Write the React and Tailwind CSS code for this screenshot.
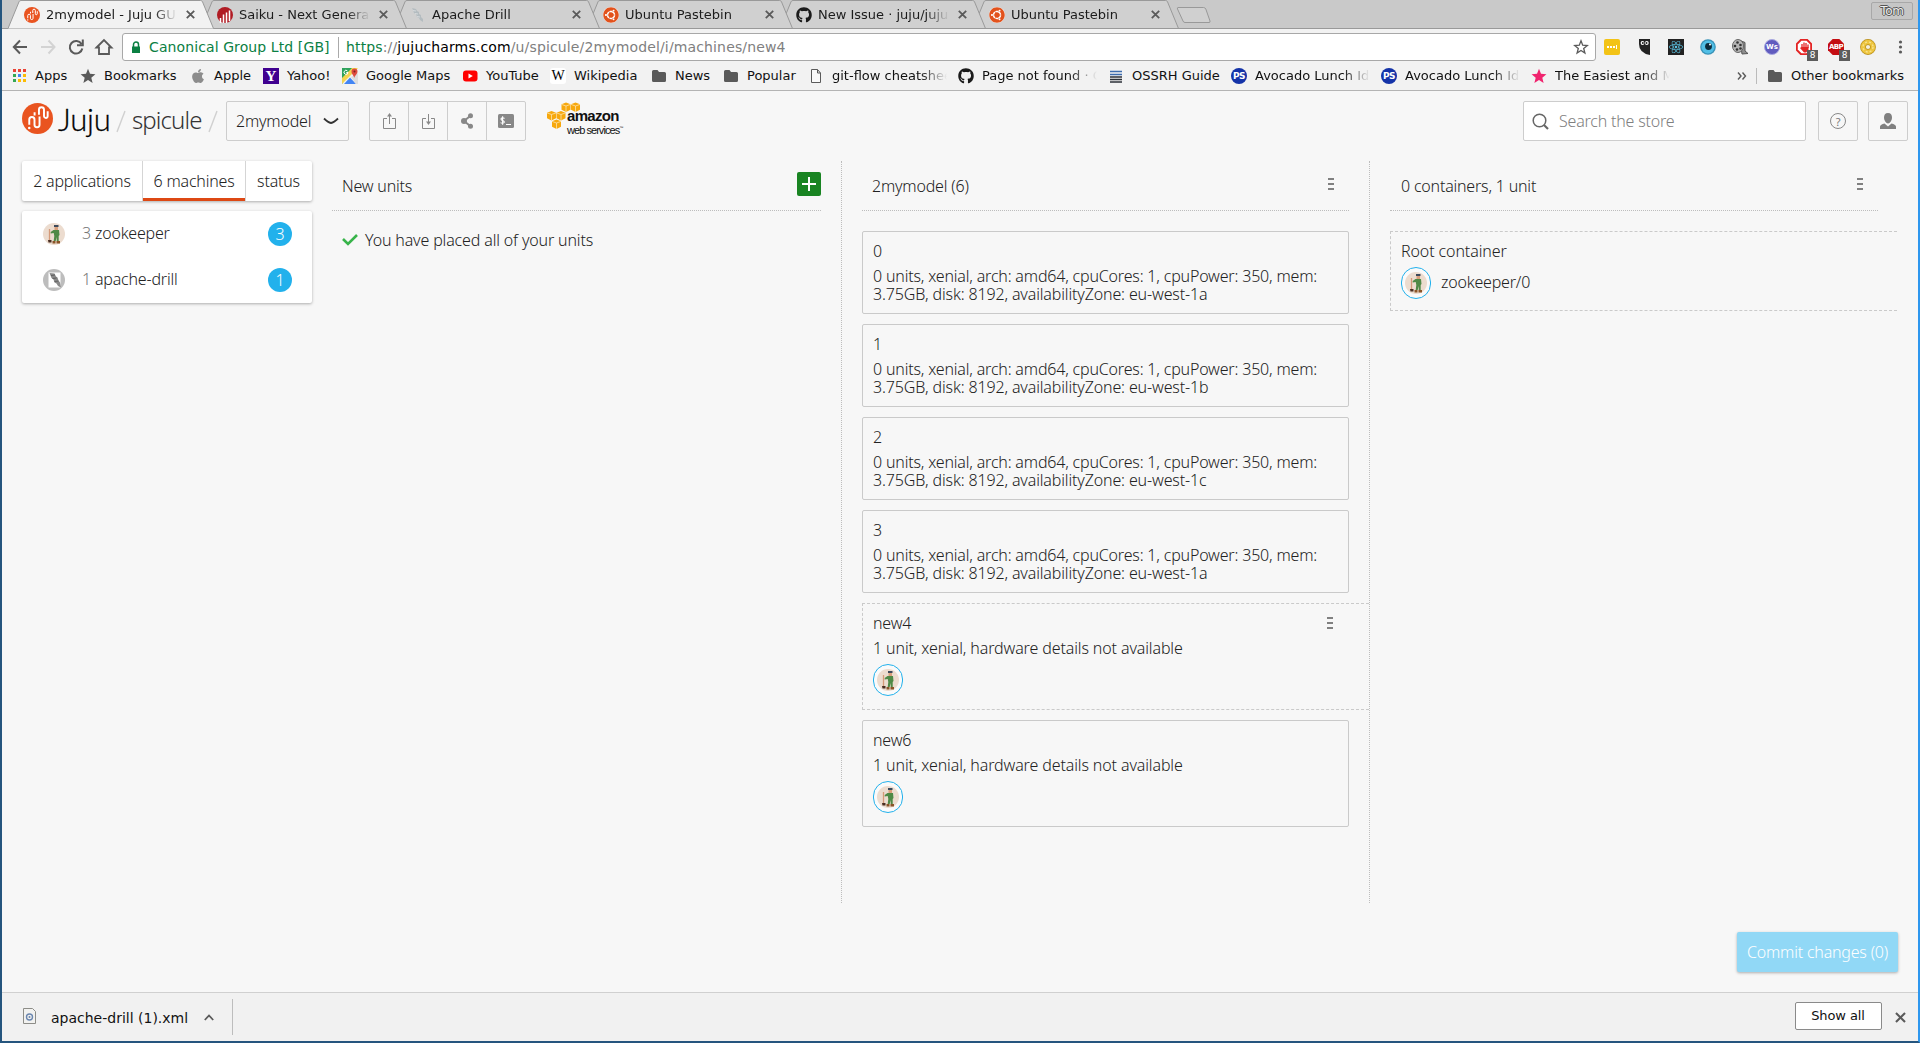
import { FaApple, FaGithub, FaReact, FaUbuntu } from 'react-icons/fa';

const machines = [
  { name: '0', zone: 'eu-west-1a' },
  { name: '1', zone: 'eu-west-1b' },
  { name: '2', zone: 'eu-west-1c' },
  { name: '3', zone: 'eu-west-1a' },
];

const JujuMark = ({ size = 16 }) => (
  <svg width={size} height={size} viewBox="0 0 32 32">
    <circle cx="16" cy="16" r="16" fill="#e95420" />
    <g fill="none" stroke="#fff" strokeWidth="2">
      <path d="M7.500 22.500V17.200a2.700 2.700 0 0 1 5.400 0V22.500a2.600 2.600 0 0 0 5.200 0V14" />
      <path d="M13 13V9.500M17.500 12V7a2.600 2.600 0 0 1 5.200 0V13.500a1.900 1.900 0 0 0 3.800 0V8.500" />
    </g>
    <circle cx="7.500" cy="25.800" r="1.300" fill="#fff" />
  </svg>
);

const SaikuMark = () => (
  <svg width="16" height="16" viewBox="0 0 16 16">
    <circle cx="8" cy="8" r="8" fill="#b01c24" />
    <path d="M3.500 16v-5M6.500 16V7.500M9.500 16V5.500M12.500 14V3.500" stroke="#fff" strokeWidth="1.500" />
  </svg>
);

const DrillMark = () => (
  <svg width="16" height="16" viewBox="0 0 16 16">
    <path d="M2 1l4 1 1 2 2 1v2l2 1v2l2 2v3l-3-2-1-2-2-1-1-3-2-1-1-3z" fill="#b4bcc0" />
    <path d="M3 3.500l3 .5M5 6.500l3 .5M7 9.500l3 .5" stroke="#dde1e3" strokeWidth=".8" />
  </svg>
);

const UbuntuMark = () => (
  <span className="flex size-4 items-center justify-center rounded-full bg-white">
    <FaUbuntu size={16} color="#e2521c" />
  </span>
);

const tabs = [
  { title: '2mymodel - Juju GUI', icon: <JujuMark />, active: true },
  { title: 'Saiku - Next Generation', icon: <SaikuMark /> },
  { title: 'Apache Drill', icon: <DrillMark /> },
  { title: 'Ubuntu Pastebin', icon: <UbuntuMark /> },
  { title: 'New Issue · juju/juju', icon: <FaGithub size={16} color="#1b1b1b" /> },
  { title: 'Ubuntu Pastebin', icon: <UbuntuMark /> },
];

const Cross = ({ size = 9, width = 1.8 }) => (
  <svg width={size} height={size} viewBox="0 0 9 9" className="shrink-0">
    <path d="M.8.8l7.400 7.400M8.200.8L.8 8.200" stroke="#5a5a5a" strokeWidth={width} />
  </svg>
);

function Tab({ title, icon, active, z }) {
  return (
    <div className="relative h-[29px] w-[193px] shrink-0" style={{ zIndex: z }}>
      <svg width="207" height="29" viewBox="0 0 207 29" className="absolute left-0 top-0 max-w-none">
        <path d="M0 28.500L11 1.800Q11.500.5 13 .5H192.500Q194 .5 194.500 1.800L205.500 28.500" fill={active ? '#f2f2f2' : '#d0d0d0'} stroke="#999" />
        {!active && <path d="M0 28.500H207" stroke="#999" />}
      </svg>
      <div className="relative flex h-[29px] items-center pl-4">
        {icon}
        <span className="ml-[6px] w-[133px] overflow-hidden whitespace-nowrap text-[13px] text-[#1c1c1c] [mask-image:linear-gradient(to_right,#000_108px,transparent_131px)]">{title}</span>
        <span className="ml-[7px]"><Cross /></span>
      </div>
    </div>
  );
}

const Folder = () => (
  <svg width="16" height="16" viewBox="0 0 16 16">
    <path d="M1 3.500Q1 2 2.500 2H6.500L8 4H13.500Q15 4 15 5.500V12.500Q15 14 13.500 14H2.500Q1 14 1 12.500z" fill="#5a5a5a" />
  </svg>
);

const Star = ({ fill }) => (
  <svg width="16" height="16" viewBox="0 0 16 16">
    <path d="M8 .8l2 5 5.400.4-4.100 3.500 1.300 5.300L8 12.100 3.400 15l1.300-5.300L.6 6.200 6 5.800z" fill={fill} />
  </svg>
);

const AppsGrid = () => (
  <svg width="16" height="16" viewBox="0 0 16 16">
    {['#ea4335', '#ea4335', '#ea4335', '#34a853', '#4285f4', '#fbbc05', '#34a853', '#fbbc05', '#fbbc05'].map((c, i) => (
      <rect key={i} x={2 + (i % 3) * 5} y={1 + Math.floor(i / 3) * 5} width="3" height="3" fill={c} />
    ))}
  </svg>
);

const MapsMark = () => (
  <svg width="16" height="16" viewBox="0 0 16 16">
    <path d="M0 0h11L0 16z" fill="#2fa25c" />
    <path d="M16 0H10L0 10v6z" fill="#f3d351" />
    <path d="M2 16l6-6.500L14 16z" fill="#4285f4" />
    <path d="M16 5v11h-2L9 9z" fill="#ddd" />
    <path d="M12.300 10C11.800 7 9.500 6.500 9.500 3.500a3 3 0 0 1 6 0C15.500 6.500 12.800 7 12.300 10z" fill="#dd4b3e" />
    <circle cx="12.500" cy="3.500" r="1" fill="#7b231e" />
    <path d="M5.500 3A2 2 0 1 0 6 4.500H4.300" fill="none" stroke="#fff" />
  </svg>
);

const YoutubeMark = () => (
  <svg width="16" height="16" viewBox="0 0 16 16">
    <rect x="1" y="2.500" width="14.500" height="11" rx="3" fill="#f00" />
    <path d="M6.500 5.500v5l4.300-2.500z" fill="#fff" />
  </svg>
);

const FileMark = () => (
  <svg width="16" height="16" viewBox="0 0 16 16">
    <path d="M3.500 1.500H9.500L12.500 5V14.500H3.500zM9.500 1.500V5H12.500" fill="#fafafa" stroke="#5a5a5a" />
  </svg>
);

const LinesMark = () => (
  <svg width="16" height="16" viewBox="0 0 16 16">
    <path d="M2 3.500h12M2 6.500h12" stroke="#3d6cae" strokeWidth="1.500" />
    <path d="M2 9h12M2 11.500h12M2 14h12" stroke="#2c3138" strokeWidth="1.400" />
  </svg>
);

const PsMark = () => (
  <span className="flex size-4 items-center justify-center rounded-full bg-[#1433a8] text-[9px] font-bold leading-none tracking-[-0.5px] text-white">PS</span>
);

const bookmarks = [
  { label: 'Apps', icon: <AppsGrid />, w: 'w-[69px]' },
  { label: 'Bookmarks', icon: <Star fill="#5a5a5a" />, w: 'w-[110px]' },
  { label: 'Apple', icon: <FaApple size={16} color="#8c8c8c" />, w: 'w-[73px]' },
  {
    label: 'Yahoo!',
    icon: <span className="flex size-4 items-center justify-center bg-[#400090] font-['Liberation_Serif'] text-[15px] font-bold leading-none text-white">Y</span>,
    w: 'w-[79px]',
  },
  { label: 'Google Maps', icon: <MapsMark />, w: 'w-[120px]' },
  { label: 'YouTube', icon: <YoutubeMark />, w: 'w-[88px]' },
  {
    label: 'Wikipedia',
    icon: <span className="flex size-4 items-center justify-center rounded-[3px] bg-white font-['Liberation_Serif'] text-[14px] leading-none text-black">W</span>,
    w: 'w-[101px]',
  },
  { label: 'News', icon: <Folder />, w: 'w-[72px]' },
  { label: 'Popular', icon: <Folder />, w: 'w-[85px]' },
  { label: 'git-flow cheatsheet', icon: <FileMark />, w: 'w-[150px]', fade: true },
  { label: 'Page not found · GitHub', icon: <FaGithub size={16} color="#1b1b1b" />, w: 'w-[150px]', fade: true },
  { label: 'OSSRH Guide', icon: <LinesMark />, w: 'w-[123px]' },
  { label: 'Avocado Lunch Ideas', icon: <PsMark />, w: 'w-[150px]', fade: true },
  { label: 'Avocado Lunch Ideas', icon: <PsMark />, w: 'w-[150px]', fade: true },
  { label: 'The Easiest and Most', icon: <Star fill="#f0246e" />, w: 'w-[150px]', fade: true },
];

function Browser() {
  return (
    <div className="font-['DejaVu_Sans',sans-serif] text-[#111]">
      {/* Tab strip */}
      <div className="relative flex h-[29px] bg-[#c9c9c9] pl-[6px]">
        <div className="absolute inset-x-0 bottom-0 h-px bg-[#999]" />
        {tabs.map((tab, i) => (
          <Tab key={i} {...tab} z={10 - i} />
        ))}
        <svg width="38" height="18" viewBox="0 0 38 18" className="ml-[10px] mt-[6px]">
          <path d="M2 1.500H27.500Q29 1.500 29.800 3L34 15Q34.500 16.500 33 16.500H9Q7.500 16.500 7 15L1.500 3Q1 1.500 2 1.500z" fill="#d0d0d0" stroke="#999" />
        </svg>
        <div className="ml-auto mr-[5px] mt-[2px] h-[18px] w-[42px] rounded-[2px] border border-[#a8a8a8] bg-[#c6c6c6] text-center text-[12px] leading-[16px] tracking-[-0.3px] text-[#eee] [text-shadow:1px_0_0_#555,-1px_0_0_#555,0_1px_0_#555,0_-1px_0_#555]">Tom</div>
      </div>

      {/* Toolbar */}
      <div className="flex h-[36px] items-center bg-[#f2f2f2] pl-[10px]">
        <svg width="104" height="18" viewBox="0 0 104 18" className="shrink-0" fill="none" strokeWidth="2">
          <path d="M15 9H2M8 2.500L1.800 9 8 15.500" stroke="#5a5a5a" />
          <path d="M29 9H42M36.500 2.500L42.500 9 36.500 15.500" stroke="#d3d3d3" />
          <path d="M69.500 6A6.300 6.300 0 1 0 70.300 10.500M70.800 1.500V7.200H65" stroke="#5a5a5a" />
          <path d="M84.500 9.500L92 2 99.500 9.500H97V16H87V9.500z" stroke="#5a5a5a" strokeWidth="1.800" />
        </svg>
        <div className="ml-[6px] flex h-[28px] w-[1474px] shrink-0 items-center rounded-[3px] border border-[#a8a8a8] bg-white pl-[8px] text-[14px]">
          <svg width="10" height="13" viewBox="0 0 10 13">
            <path d="M1 5.500h8v6.500H1z" fill="#0b8043" />
            <path d="M2.500 6V3.500a2.500 2.500 0 0 1 5 0V6" fill="none" stroke="#0b8043" strokeWidth="1.500" />
          </svg>
          <span className="ml-[8px] w-[190px] whitespace-nowrap border-r border-[#aaa] tracking-[0.1px] text-[#0b8043]">Canonical Group Ltd [GB]</span>
          <span className="ml-[7px] whitespace-nowrap tracking-[0.14px] text-[#808080]">
            <span className="text-[#0b8043]">https</span>://<span className="text-black">jujucharms.com</span>/u/spicule/2mymodel/i/machines/new4
          </span>
          <svg width="16" height="16" viewBox="0 0 16 16" className="ml-auto mr-[6px]">
            <path d="M8 1.800l1.700 4.400 4.600.3-3.600 3 1.200 4.500L8 11.500 4.100 14l1.200-4.500-3.600-3 4.600-.3z" fill="none" stroke="#5a5a5a" strokeWidth="1.300" />
          </svg>
        </div>
        <div className="ml-[8px] flex items-center gap-4">
          <span className="flex size-4 items-center justify-center gap-px rounded-[2px] bg-[#f3c316]">
            <i className="size-[2px] bg-white" /><i className="size-[2px] bg-white" /><i className="size-[2px] bg-white" /><i className="h-1 w-px bg-white" />
          </span>
          <svg width="16" height="16" viewBox="0 0 16 16">
            <path d="M3 0h11v16Q3 14 3 5z" fill="#222" />
            <circle cx="6.500" cy="4" r="1.900" fill="#fff" /><circle cx="10.800" cy="4" r="1.900" fill="#fff" />
            <circle cx="6.800" cy="4" r="1" fill="#222" /><circle cx="10.500" cy="4" r="1" fill="#222" />
          </svg>
          <span className="flex size-4 items-center justify-center bg-[#222]"><FaReact size={14} color="#5cc4e4" /></span>
          <svg width="16" height="16" viewBox="0 0 16 16">
            <circle cx="8" cy="8" r="7.800" fill="#3a93b8" /><circle cx="8" cy="8" r="6.500" fill="#52bfe6" />
            <circle cx="8.500" cy="7.500" r="3.400" fill="#0b2a3a" /><circle cx="10" cy="5.500" r="1" fill="#fff" />
          </svg>
          <svg width="16" height="16" viewBox="0 0 16 16">
            <path d="M8 1.500l5 2V12l3 2.500-6 .5z" fill="#8f8f8f" stroke="#555" />
            <ellipse cx="6" cy="7" rx="5.500" ry="6.500" fill="#b5b5b5" stroke="#666" />
            <circle cx="5.500" cy="3.500" r="1.300" fill="#333" /><circle cx="8.500" cy="6" r="1.300" fill="#333" />
            <circle cx="3" cy="7" r="1.300" fill="#333" /><circle cx="5" cy="10.500" r="1.300" fill="#333" /><circle cx="8.500" cy="9.500" r="1.300" fill="#333" />
          </svg>
          <span className="flex size-4 items-center justify-center rounded-full border border-[#a9a9e0] bg-[#615cbf] text-[7px] font-bold leading-none text-white">Ws</span>
          <span className="relative size-4">
            <svg width="16" height="16" viewBox="0 0 16 16">
              <path d="M5 .8h6L15.200 5v6L11 15.200H5L.8 11V5z" fill="#fff" stroke="#e32424" strokeWidth="2" />
              <path d="M6 8.500V5M8 8V3.500M10 8V4M12 9V5.500" stroke="#e32424" strokeWidth="1.300" />
              <path d="M5.500 8h7v3L10 13.500H8L4 9z" fill="#e32424" />
            </svg>
            <b className="absolute left-[11px] top-[11px] h-[11px] w-[11px] bg-[#5c5c5c] text-center text-[9px] font-normal leading-[11px] text-white">8</b>
          </span>
          <span className="relative size-4">
            <svg width="16" height="16" viewBox="0 0 16 16"><path d="M4.700 0h6.600L16 4.700v6.600L11.300 16H4.700L0 11.300V4.700z" fill="#c40d12" /></svg>
            <b className="absolute inset-x-0 top-[3px] text-center text-[7px] font-bold leading-[10px] tracking-[-0.6px] text-white">ABP</b>
            <b className="absolute left-[11px] top-[11px] h-[11px] w-[11px] bg-[#5c5c5c] text-center text-[9px] font-normal leading-[11px] text-white">8</b>
          </span>
          <svg width="16" height="16" viewBox="0 0 16 16">
            <circle cx="8" cy="8" r="5" fill="#f4f0e0" stroke="#b98f1c" strokeWidth="5.800" />
            <circle cx="8" cy="8" r="5" fill="none" stroke="#edc53f" strokeWidth="4.400" />
            <circle cx="8" cy="8" r="5" fill="none" stroke="#f8e08a" strokeWidth="1.400" strokeDasharray="2 2" />
          </svg>
          <svg width="16" height="16" viewBox="0 0 16 16" fill="#5a5a5a">
            <circle cx="8.500" cy="3" r="1.600" /><circle cx="8.500" cy="8" r="1.600" /><circle cx="8.500" cy="13" r="1.600" />
          </svg>
        </div>
      </div>

      {/* Bookmarks bar */}
      <div className="flex h-[26px] items-center border-b border-[#b4b4b4] bg-[#f2f2f2] pb-[3px] pl-[9px] text-[13px]">
        {bookmarks.map((b, i) => (
          <div key={i} className={`flex shrink-0 items-center ${b.w}`}>
            {b.icon}
            <span className={b.fade ? 'ml-2 w-[115px] overflow-hidden whitespace-nowrap [mask-image:linear-gradient(to_right,#000_88px,transparent_115px)]' : 'ml-2 whitespace-nowrap'}>{b.label}</span>
          </div>
        ))}
        <svg width="10" height="8" viewBox="0 0 10 8" className="ml-[56px]">
          <path d="M1 .5L4 4 1 7.500M5.500.5L8.500 4 5.500 7.500" fill="none" stroke="#5a5a5a" strokeWidth="1.400" />
        </svg>
        <div className="ml-[9px] mr-[10px] h-4 w-px bg-[#bbb]" />
        <Folder />
        <span className="ml-2 whitespace-nowrap">Other bookmarks</span>
      </div>
    </div>
  );
}

const AwsLogo = () => (
  <div className="relative ml-[20px] h-[34px] w-[80px]">
    <svg width="36" height="30" viewBox="0 0 36 30">
      {[[15.5, 1.5], [25, 1.5], [1, 10], [10.5, 10], [6, 18.500]].map(([x, y], i) => (
        <g key={i} transform={`translate(${x} ${y})`}>
          <path d="M0 1.800L4.500 0 9 1.800V7.200L4.500 9.500 0 7.200z" fill="#f7a80d" />
          <path d="M0 1.900L4.500 3.500 9 1.900M4.500 3.500V9.500" fill="none" stroke="#fde3ad" strokeWidth=".8" />
        </g>
      ))}
    </svg>
    <div className="absolute left-[21px] top-[8px] font-['Liberation_Sans',sans-serif] text-[15px] font-bold leading-[14px] tracking-[-0.7px] text-[#111]">amazon</div>
    <div className="absolute left-[21px] top-[22px] whitespace-nowrap font-['Liberation_Sans',sans-serif] text-[11px] leading-[10px] tracking-[-0.95px] text-[#111]">web services<span className="align-super text-[4px]">™</span></div>
  </div>
);

function Header() {
  return (
    <header className="flex h-[50px] shrink-0 items-start pl-5 pr-[10px] pt-[10px] text-[16px]">
      <div className="mt-[2px]"><JujuMark size={31} /></div>
      <span className="-mt-px ml-[5px] w-[57px] font-['Lato'] text-[31px] leading-[38px] text-black [-webkit-text-stroke:0.3px_#000]">Juju</span>
      <svg width="10" height="24" viewBox="0 0 10 24" className="ml-px mt-[9px]"><path d="M1 22L9 1" stroke="#d0d0d0" strokeWidth="1.400" /></svg>
      <span className="ml-[6px] w-[70px] text-[24px] font-light leading-[38px] tracking-[-0.9px] text-[#333]">spicule</span>
      <svg width="10" height="24" viewBox="0 0 10 24" className="ml-[6px] mt-[9px]"><path d="M1 22L9 1" stroke="#d0d0d0" strokeWidth="1.400" /></svg>
      <div className="ml-[8px] flex h-10 w-[123px] items-center justify-between rounded-[2px] border border-[#cdcdcd] pl-[9px] pr-[9px]">
        2mymodel
        <svg width="16" height="8" viewBox="0 0 16 8"><path d="M1 1.500Q5 5.500 8 6 11 5.500 15 1.500" fill="none" stroke="#333" strokeWidth="1.800" /></svg>
      </div>
      <div className="ml-5 flex h-10 w-[157px] divide-x divide-[#cdcdcd] rounded-[2px] border border-[#cdcdcd]">
        <div className="flex flex-1 items-center justify-center">
          <svg width="16" height="18" viewBox="0 0 16 18" fill="none" stroke="#888"><path d="M6 6.500H2.500V16.500H14.500V6.500H11M8.500 12V3" /><path d="M8.500 1l2.500 3.500H6z" fill="#888" stroke="none" /></svg>
        </div>
        <div className="flex flex-1 items-center justify-center">
          <svg width="16" height="18" viewBox="0 0 16 18" fill="none" stroke="#888"><path d="M6 6.500H2.500V16.500H14.500V6.500H11M8.500 2V10" /><path d="M8.500 13L11 9.500H6z" fill="#888" stroke="none" /></svg>
        </div>
        <div className="flex flex-1 items-center justify-center">
          <svg width="14" height="16" viewBox="0 0 14 16" fill="#888"><circle cx="4" cy="8" r="3" /><circle cx="10.500" cy="2.800" r="2.500" /><circle cx="10.500" cy="13.200" r="2.500" /><path d="M10.500 2.800L4 8 10.500 13.200" fill="none" stroke="#888" strokeWidth="2" /></svg>
        </div>
        <div className="flex flex-1 items-center justify-center">
          <svg width="16" height="14" viewBox="0 0 16 14"><rect width="16" height="14" rx="1.500" fill="#888" /><path d="M6.500 4.500Q4.700 3.200 3.300 4.200 2.500 5.500 4.500 6.500 6.800 7.300 6 8.600 4.500 9.800 2.600 8.600M4.600 2.300V10.700M8 10.500H13" fill="none" stroke="#fff" strokeWidth="1.100" /></svg>
        </div>
      </div>
      <AwsLogo />
      <div className="ml-auto flex h-10 w-[283px] items-center rounded-[2px] border border-[#cdcdcd] bg-white pl-[8px] text-[#808080]">
        <svg width="17" height="17" viewBox="0 0 17 17" fill="none" stroke="#666"><circle cx="7.500" cy="7.500" r="6.300" strokeWidth="1.500" /><path d="M12 12l4 4" strokeWidth="2.200" /></svg>
        <span className="ml-[10px]">Search the store</span>
      </div>
      <div className="ml-3 flex h-10 w-10 items-center justify-center rounded-[2px] border border-[#cdcdcd]">
        <span className="flex size-4 items-center justify-center rounded-full border border-[#888] text-[11px] font-normal leading-none text-[#777]">?</span>
      </div>
      <div className="ml-[10px] flex h-10 w-10 items-center justify-center rounded-[2px] border border-[#cdcdcd]">
        <svg width="16" height="16" viewBox="0 0 16 16" fill="#808080"><path d="M8 0C10.800 0 12 2 12 4.500S10.500 10 8 10.500C5.500 10 4 7 4 4.500S5.200 0 8 0z" /><path d="M0 16v-2.500Q.5 11.500 4.500 10.500L8 13.500 11.500 10.500Q15.500 11.500 16 13.500V16z" /></svg>
      </div>
    </header>
  );
}

const Zookeeper = () => (
  <svg width="22" height="22" viewBox="0 0 22 22">
    <circle cx="11" cy="11" r="11" fill="#ecdccf" />
    <path d="M6.500 6v11" stroke="#d59a78" strokeWidth="1.300" />
    <path d="M5 17h3.500v2.500H5.500z" fill="#4a2e22" />
    <path d="M11 2h4.500v2H11z" fill="#3c4a5c" />
    <path d="M11.500 4h3.500v3h-3.500z" fill="#d9a07c" />
    <path d="M10.500 7h5.500l.5 5-.8 1v5h-2v-4l-1 4h-2l.6-5-.6-3-3 .5V9z" fill="#4f8a46" />
    <path d="M9.500 18h3v2.500h-3zM13.500 18h3.500v2.500h-3.500z" fill="#8a5528" />
  </svg>
);

const Drill = () => (
  <svg width="22" height="22" viewBox="0 0 22 22">
    <circle cx="11" cy="11" r="11" fill="#bdbdbd" />
    <path d="M5.500 3.500h12v15h-12z" fill="#fff" />
    <path d="M6.500 4l5 .5 1.500 3 1.500 1 1 3 1.500 2 1 5-3-1.500-1.500-2.500-2-1-1-3-2-1.500z" fill="#8a8a8a" />
    <path d="M8 6.500l4-.5M9.500 9.500l4-.5M11.500 12.500l4-.5" stroke="#555" strokeWidth=".8" />
  </svg>
);

const UnitAvatar = () => (
  <span className="flex h-[32px] w-[30px] items-center justify-center rounded-full border border-[#22b1ec] bg-[#fafafa]"><Zookeeper /></span>
);

const Kebab = () => (
  <span className="flex flex-col gap-[3px]">
    <i className="h-[2px] w-[6px] bg-[#808080]" /><i className="h-[2px] w-[6px] bg-[#808080]" /><i className="h-[2px] w-[6px] bg-[#808080]" />
  </span>
);

function AppRow({ icon, count, name }) {
  return (
    <div className="flex h-[46px] items-center pl-[21px] pr-5">
      {icon}
      <span className="-mt-[2px] ml-[17px] text-[#777]">{count}</span>
      <span className="-mt-[2px] ml-1">{name}</span>
      <span className="ml-auto flex size-6 items-center justify-center rounded-full bg-[#22b1ec] text-white">{count}</span>
    </div>
  );
}

function Sidebar() {
  return (
    <aside className="ml-5 w-[290px] shrink-0">
      <div className="flex h-10 rounded-[2px] bg-white shadow-[0_1px_3px_rgba(0,0,0,0.3)]">
        <div className="flex w-[121px] items-center justify-center border-r border-[#d5d5d5]">2 applications</div>
        <div className="flex w-[102px] items-center justify-center border-b-[3px] border-[#dd4814] pt-[3px]">6 machines</div>
        <div className="flex flex-1 items-center justify-center border-l border-[#d5d5d5] pr-px">status</div>
      </div>
      <div className="mt-[10px] h-[92px] rounded-[2px] bg-white shadow-[0_1px_3px_rgba(0,0,0,0.3)]">
        <AppRow icon={<Zookeeper />} count="3" name="zookeeper" />
        <AppRow icon={<Drill />} count="1" name="apache-drill" />
      </div>
    </aside>
  );
}

function Machine({ name, children }) {
  return (
    <div className="h-[83px] rounded-[2px] border border-[#cacaca] px-[10px] pt-[10px] leading-[18px]">
      <div>{name}</div>
      <div className="mt-[7px]">{children}</div>
    </div>
  );
}

function Columns() {
  return (
    <>
      <section className="ml-5 w-[510px] shrink-0 border-r border-dotted border-[#bdbdbd] pr-5">
        <div className="flex h-[50px] items-center border-b border-dotted border-[#bdbdbd] pl-[10px]">
          <span>New units</span>
          <span className="mb-[3px] ml-auto flex size-6 items-center justify-center rounded-[2px] bg-[#198422]">
            <svg width="14" height="14" viewBox="0 0 14 14"><path d="M7 0v14M0 7h14" stroke="#fff" strokeWidth="2" /></svg>
          </span>
        </div>
        <div className="flex items-center pl-[10px] pt-[17px]">
          <svg width="16" height="12" viewBox="0 0 16 12"><path d="M1 5l5 5L15 1" fill="none" stroke="#38b44a" strokeWidth="2.600" /></svg>
          <span className="ml-[7px] tracking-[-0.15px]">You have placed all of your units</span>
        </div>
      </section>

      <section className="w-[528px] shrink-0 border-r border-dotted border-[#bdbdbd] pl-5">
        <div className="mr-5 flex h-[50px] items-center justify-between border-b border-dotted border-[#bdbdbd] pl-[10px] pr-[15px]">
          <span>2mymodel (6)</span>
          <span className="-mt-[3px]"><Kebab /></span>
        </div>
        <div className="mr-5 mt-5 flex flex-col gap-[10px]">
          {machines.map((m) => (
            <Machine key={m.name} name={m.name}>
              <div className="tracking-[-0.18px]">0 units, xenial, arch: amd64, cpuCores: 1, cpuPower: 350, mem:</div>
              <div className="tracking-[-0.14px]">3.75GB, disk: 8192, availabilityZone: {m.zone}</div>
            </Machine>
          ))}
          <div className="-mr-5 flex h-[107px] justify-between border border-r-0 border-dashed border-[#cacaca] pl-[10px] pr-[36px] pt-[10px] leading-[18px]">
            <div>
              <div>new4</div>
              <div className="mb-[7px] mt-[7px] tracking-[-0.12px]">1 unit, xenial, hardware details not available</div>
              <UnitAvatar />
            </div>
            <span className="mt-[3px]"><Kebab /></span>
          </div>
          <div className="h-[107px] rounded-[2px] border border-[#cacaca] pl-[10px] pt-[10px] leading-[18px]">
            <div>new6</div>
            <div className="mb-[7px] mt-[7px] tracking-[-0.12px]">1 unit, xenial, hardware details not available</div>
            <UnitAvatar />
          </div>
        </div>
      </section>

      <section className="w-[527px] shrink-0 pl-5">
        <div className="mr-[19px] flex h-[50px] items-center justify-between border-b border-dotted border-[#bdbdbd] pl-[11px] pr-[15px]">
          <span>0 containers, 1 unit</span>
          <span className="-mt-[3px]"><Kebab /></span>
        </div>
        <div className="mt-5 h-[80px] border border-r-0 border-dashed border-[#cacaca] pl-[10px] pt-[10px] leading-[18px]">
          <div className="tracking-[-0.1px]">Root container</div>
          <div className="mt-[7px] flex items-center">
            <UnitAvatar />
            <span className="-mt-[2px] ml-[10px]">zookeeper/0</span>
          </div>
        </div>
      </section>
    </>
  );
}

export default function App() {
  return (
    <div className="flex h-[1043px] w-[1920px] flex-col overflow-hidden border-b-2 border-l-2 border-r-2 border-b-[#25557e] border-l-[#25557e] border-r-[#2e97ee] bg-[#f7f7f7]">
      <Browser />
      <div className="flex flex-1 flex-col font-['Noto_Sans',sans-serif] text-[16px] font-light tracking-[-0.2px] text-[#222]">
        <Header />
        <main className="mt-5 flex h-[742px] shrink-0">
          <Sidebar />
          <Columns />
        </main>
        <div className="mr-5 mt-[29px] flex h-10 w-[161px] items-center justify-center self-end rounded-[2px] bg-[#91d8f6] text-white shadow-[0_1px_3px_rgba(0,0,0,0.3)]">Commit changes (0)</div>
      </div>

      {/* Downloads */}
      <footer className="flex h-[49px] shrink-0 items-center border-t border-[#d0d0d0] bg-[#f1f1f1] font-['DejaVu_Sans',sans-serif] text-[#111]">
        <svg width="16" height="18" viewBox="0 0 16 18" className="-mt-[2px] ml-5">
          <path d="M1.500 1.500H10.500L13.500 4.500V16.500H1.500z" fill="#f2f2f0" stroke="#8d8d88" />
          <circle cx="7.500" cy="10" r="3" fill="none" stroke="#6c87b0" strokeWidth="1.400" /><circle cx="7.500" cy="10" r="1" fill="#6c87b0" />
        </svg>
        <span className="ml-[13px] mt-[2px] w-[138px] whitespace-nowrap text-[14px]">apache-drill (1).xml</span>
        <svg width="10" height="7" viewBox="0 0 10 7" className="ml-[15px]"><path d="M.8 6L5 1.500 9.200 6" fill="none" stroke="#5a5a5a" strokeWidth="1.800" /></svg>
        <div className="ml-[18px] h-9 w-px bg-[#bdbdbd]" />
        <div className="mb-[3px] ml-auto flex h-7 w-[87px] items-center justify-center rounded-[2px] border border-[#8a8a8a] bg-white pr-px text-[13px] tracking-[-0.1px]">Show all</div>
        <span className="ml-[13px] mr-[12px]"><Cross size={11} width={1.7} /></span>
      </footer>
    </div>
  );
}
